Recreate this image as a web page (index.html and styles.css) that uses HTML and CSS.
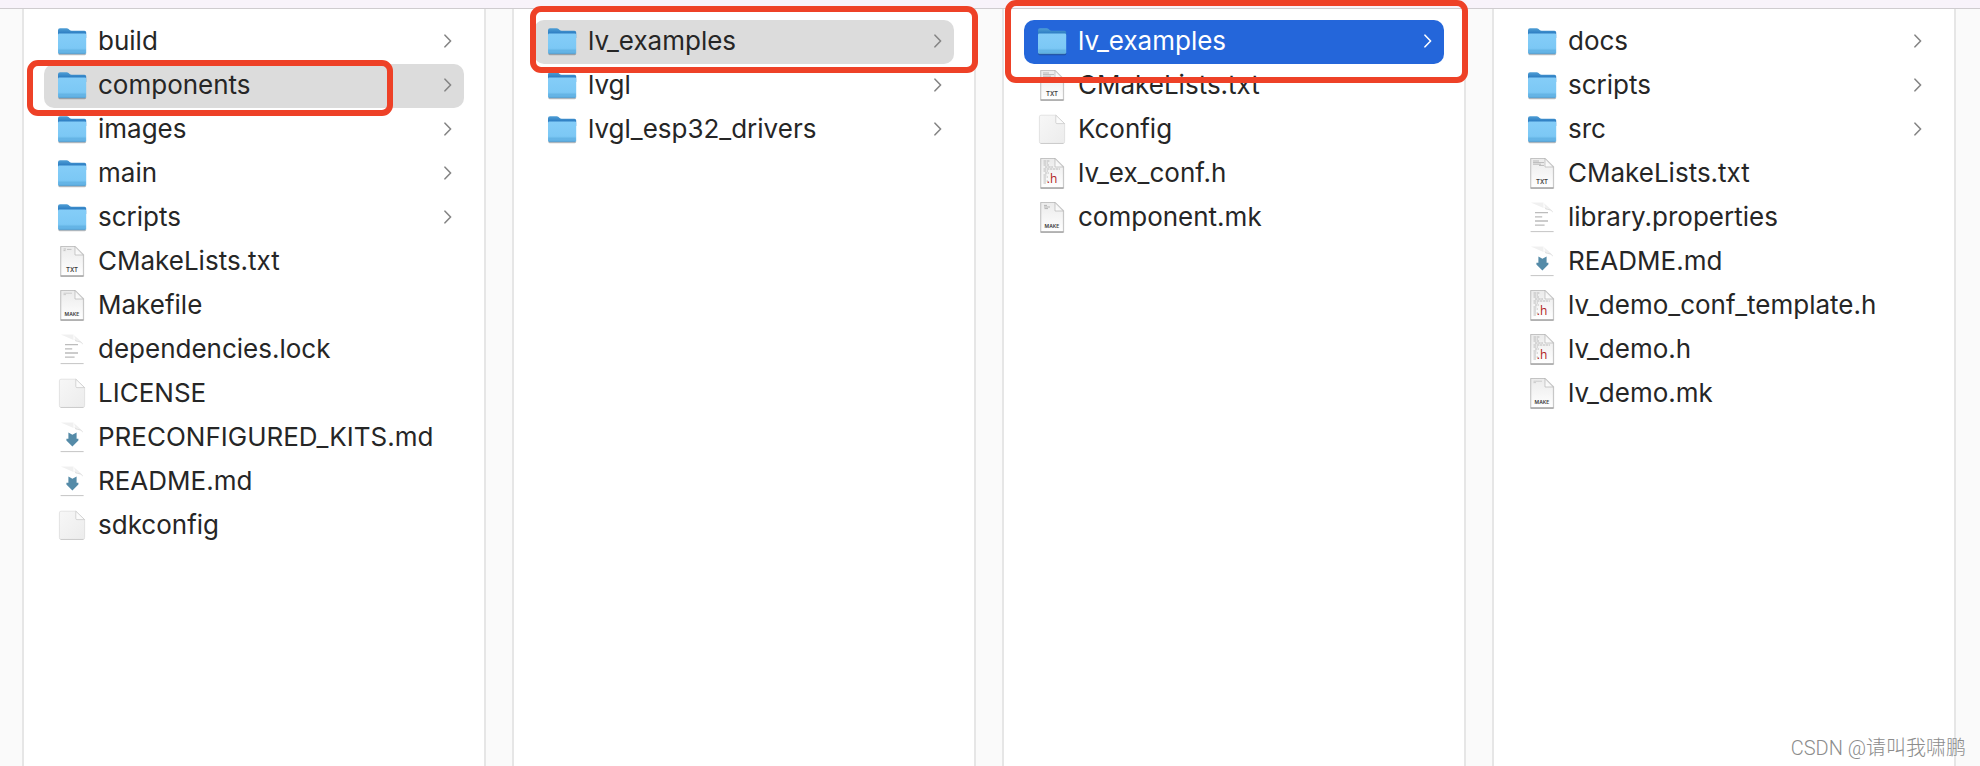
FILE: index.html
```
<!DOCTYPE html>
<html lang="en">
  <head>
    <meta charset="UTF-8" />
    <meta name="viewport" content="width=device-width, initial-scale=1.0" />
    <title>components</title>
    <link rel="stylesheet" href="styles.css">
  </head>
  <body>
    <!-- Shared icons -->
    <svg class="sprite" width="0" height="0" aria-hidden="true">
      <defs>
        <linearGradient id="folderBack" x1="0" y1="0" x2="0" y2="1">
          <stop offset="0" stop-color="#4f9fd6" />
          <stop offset="0.5" stop-color="#2f7fc3" />
          <stop offset="1" stop-color="#2f7fc3" />
        </linearGradient>
        <linearGradient id="folderFront" x1="0" y1="0" x2="0" y2="1">
          <stop offset="0" stop-color="#84cdf8" />
          <stop offset="0.7" stop-color="#7cc8f5" />
          <stop offset="1" stop-color="#62b2e4" />
        </linearGradient>
        <linearGradient id="paper" x1="0" y1="0" x2="0" y2="1">
          <stop offset="0" stop-color="#ebebeb" />
          <stop offset="1" stop-color="#ffffff" />
        </linearGradient>
        <linearGradient id="blankPaper" x1="0" y1="0" x2="1" y2="1">
          <stop offset="0" stop-color="#f7f7f7" />
          <stop offset="1" stop-color="#ececec" />
        </linearGradient>
        <linearGradient id="fold" x1="0" y1="1" x2="1" y2="0">
          <stop offset="0" stop-color="#ffffff" />
          <stop offset="0.5" stop-color="#f4f4f4" />
          <stop offset="1" stop-color="#d8d8d8" />
        </linearGradient>
        <linearGradient id="softFold" x1="0" y1="1" x2="1" y2="0">
          <stop offset="0" stop-color="#ffffff" />
          <stop offset="1" stop-color="#dedede" />
        </linearGradient>
      </defs>

      <symbol id="icon-folder" viewBox="0 0 32 32">
        <rect x="2.2" y="26" width="28" height="3.2" rx="1.4" fill="#000" opacity="0.25" />
        <path d="M2 4.2Q2 2.2 4 2.2H10.6Q11.8 2.2 12.6 3L13.6 4Q14.4 4.8 15.6 4.8H28.4Q30.2 4.8 30.2 6.4V12H2Z" fill="url(#folderBack)" />
        <path d="M2 9Q2 7.6 3.4 7.6H28.8Q30.2 7.6 30.2 9V26.6Q30.2 28 28.8 28H3.4Q2 28 2 26.6Z" fill="url(#folderFront)" />
        <path d="M2.4 24.2H29.8M2.4 26H29.8" stroke="#4a9ed3" stroke-width="0.6" opacity="0.7" />
        <path d="M3 27.8H29.2" stroke="#558eb8" stroke-width="0.6" />
      </symbol>

      <symbol id="icon-doc" viewBox="0 0 32 32">
        <path d="M4 0H19.5L28.2 8.6V30.6H4Z" fill="#000" opacity="0.12" />
        <path d="M4.8 0.5H19L27.4 9V29.8H4.8Z" fill="url(#paper)" stroke="#b5b5b5" stroke-width="0.7" />
        <path d="M4.6 30.1H27.6" stroke="#858585" stroke-width="0.9" />
        <path d="M19 0.5L27.4 9H19Z" fill="url(#fold)" stroke="#b4b4b4" stroke-width="0.7" />
      </symbol>

      <symbol id="icon-txt" viewBox="0 0 32 32">
        <use href="#icon-doc" />
        <path d="M7.5 3H10M11 3.4H15.5M7.5 4.6H9.5" stroke="#b0b0b0" stroke-width="0.7" />
      </symbol>

      <symbol id="icon-txt-full" viewBox="0 0 32 32">
        <use href="#icon-doc" />
        <path d="M7 3H13M7 4.6H18M7 6.2H15M13 7.4H18" stroke="#a4a4a4" stroke-width="0.7" />
      </symbol>

      <symbol id="icon-make" viewBox="0 0 32 32">
        <use href="#icon-doc" />
        <path d="M7.5 3.2H16M7.5 4.6H10" stroke="#bdbdbd" stroke-width="0.7" />
      </symbol>

      <symbol id="icon-make-full" viewBox="0 0 32 32">
        <use href="#icon-doc" />
        <path d="M8 3.4H11M8 5H14M8.5 6.6H12" stroke="#a4a4a4" stroke-width="0.8" />
      </symbol>

      <symbol id="icon-header" viewBox="0 0 32 32">
        <use href="#icon-doc" />
        <path d="M7.5 3H14M7.5 5H12M7.5 7H13M9 9H17M7.5 11H24M7.5 13H12M9 15H13M7.5 17H11M7.5 19H12M7.5 21H10M7.5 23H12M7.5 25H10" stroke="#adadad" stroke-width="0.8" stroke-dasharray="2.5 0.6" />
      </symbol>

      <symbol id="icon-text" viewBox="0 0 32 32">
        <path d="M4.8 0.5H17.5V6Z" fill="#ececec" opacity="0.8" />
        <path d="M17 0.5Q18.6 1 18.8 5.2L19.2 7.6Q25 7.6 26.8 10Q25.8 7.6 17 0.5Z" fill="url(#softFold)" />
        <path d="M19 5.6Q19.4 7.2 21.6 7.3Q25.4 7.6 26.8 10" fill="none" stroke="#d5d5d5" stroke-width="0.7" />
        <path d="M9 10.6H22M9 14.8H16.2M9 19H22M9 23.1H18.6" stroke="#bcbcbc" stroke-width="1.3" />
        <path d="M4.6 29.6H27.6" stroke="#bdbdbd" stroke-width="0.9" />
      </symbol>

      <symbol id="icon-markdown" viewBox="0 0 32 32">
        <path d="M4.8 0.5H17.5V6Z" fill="#ececec" opacity="0.8" />
        <path d="M17 0.5Q18.6 1 18.8 5.2L19.2 7.6Q25 7.6 26.8 10Q25.8 7.6 17 0.5Z" fill="url(#softFold)" />
        <path d="M19 5.6Q19.4 7.2 21.6 7.3Q25.4 7.6 26.8 10" fill="none" stroke="#d5d5d5" stroke-width="0.7" />
        <path d="M12.4 10.4L16.4 12.8L20.6 10.4V16.8H22.4V18.4L16.4 24.4L10.4 18.4V16.8H12.4Z" fill="#558ba8" />
        <path d="M4.6 29.6H27.6" stroke="#bdbdbd" stroke-width="0.9" />
      </symbol>

      <symbol id="icon-blank" viewBox="0 0 32 32">
        <path d="M5 1.2H19.8L28.6 9.6V27.8Q28.6 29.4 27 29.4H5Q3.4 29.4 3.4 27.8V2.8Q3.4 1.2 5 1.2Z" fill="url(#blankPaper)" stroke="#dadada" stroke-width="0.7" />
        <path d="M4.6 29.5H27.4" stroke="#c2c2c2" stroke-width="0.7" />
        <path d="M19.8 1.2L28.6 9.6H21Q19.8 9.6 19.8 8.4Z" fill="#fbfbfb" stroke="#c6c6c6" stroke-width="0.7" />
      </symbol>

      <symbol id="icon-chevron" viewBox="0 0 8 14">
        <path d="M1 1.2L6.6 7L1 12.8" fill="none" stroke="currentColor" stroke-width="1.6" stroke-linecap="round" stroke-linejoin="round" />
      </symbol>
    </svg>

    <header class="toolbar"></header>

    <main class="browser">
      <nav class="column" aria-label="Project">
        <a class="row" href="#"><svg class="icon"><use href="#icon-folder" /></svg><span class="name">build</span><svg class="chevron"><use href="#icon-chevron" /></svg></a>
        <a class="row selected" href="#"><svg class="icon"><use href="#icon-folder" /></svg><span class="name">components</span><svg class="chevron"><use href="#icon-chevron" /></svg><span class="mark mark-components"></span></a>
        <a class="row" href="#"><svg class="icon"><use href="#icon-folder" /></svg><span class="name">images</span><svg class="chevron"><use href="#icon-chevron" /></svg></a>
        <a class="row" href="#"><svg class="icon"><use href="#icon-folder" /></svg><span class="name">main</span><svg class="chevron"><use href="#icon-chevron" /></svg></a>
        <a class="row" href="#"><svg class="icon"><use href="#icon-folder" /></svg><span class="name">scripts</span><svg class="chevron"><use href="#icon-chevron" /></svg></a>
        <a class="row" href="#"><svg class="icon"><use href="#icon-txt" /><text x="16" y="26" class="doc-tag">TXT</text></svg><span class="name">CMakeLists.txt</span></a>
        <a class="row" href="#"><svg class="icon"><use href="#icon-make" /><text x="16" y="26" class="doc-tag small">MAKE</text></svg><span class="name">Makefile</span></a>
        <a class="row" href="#"><svg class="icon"><use href="#icon-text" /></svg><span class="name">dependencies.lock</span></a>
        <a class="row" href="#"><svg class="icon"><use href="#icon-blank" /></svg><span class="name">LICENSE</span></a>
        <a class="row" href="#"><svg class="icon"><use href="#icon-markdown" /></svg><span class="name">PRECONFIGURED_KITS.md</span></a>
        <a class="row" href="#"><svg class="icon"><use href="#icon-markdown" /></svg><span class="name">README.md</span></a>
        <a class="row" href="#"><svg class="icon"><use href="#icon-blank" /></svg><span class="name">sdkconfig</span></a>
      </nav>

      <nav class="column" aria-label="components">
        <a class="row selected" href="#"><svg class="icon"><use href="#icon-folder" /></svg><span class="name">lv_examples</span><svg class="chevron"><use href="#icon-chevron" /></svg><span class="mark mark-parent"></span></a>
        <a class="row" href="#"><svg class="icon"><use href="#icon-folder" /></svg><span class="name">lvgl</span><svg class="chevron"><use href="#icon-chevron" /></svg></a>
        <a class="row" href="#"><svg class="icon"><use href="#icon-folder" /></svg><span class="name">lvgl_esp32_drivers</span><svg class="chevron"><use href="#icon-chevron" /></svg></a>
      </nav>

      <nav class="column" aria-label="lv_examples">
        <a class="row active" href="#"><svg class="icon"><use href="#icon-folder" /></svg><span class="name">lv_examples</span><svg class="chevron"><use href="#icon-chevron" /></svg><span class="mark mark-active"></span></a>
        <a class="row" href="#"><svg class="icon"><use href="#icon-txt-full" /><text x="16" y="26" class="doc-tag">TXT</text></svg><span class="name">CMakeLists.txt</span></a>
        <a class="row" href="#"><svg class="icon"><use href="#icon-blank" /></svg><span class="name">Kconfig</span></a>
        <a class="row" href="#"><svg class="icon"><use href="#icon-header" /><text x="16" y="25" class="doc-ext">.h</text></svg><span class="name">lv_ex_conf.h</span></a>
        <a class="row" href="#"><svg class="icon"><use href="#icon-make-full" /><text x="16" y="26" class="doc-tag small">MAKE</text></svg><span class="name">component.mk</span></a>
      </nav>

      <nav class="column" aria-label="lv_examples contents">
        <a class="row" href="#"><svg class="icon"><use href="#icon-folder" /></svg><span class="name">docs</span><svg class="chevron"><use href="#icon-chevron" /></svg></a>
        <a class="row" href="#"><svg class="icon"><use href="#icon-folder" /></svg><span class="name">scripts</span><svg class="chevron"><use href="#icon-chevron" /></svg></a>
        <a class="row" href="#"><svg class="icon"><use href="#icon-folder" /></svg><span class="name">src</span><svg class="chevron"><use href="#icon-chevron" /></svg></a>
        <a class="row" href="#"><svg class="icon"><use href="#icon-txt-full" /><text x="16" y="26" class="doc-tag">TXT</text></svg><span class="name">CMakeLists.txt</span></a>
        <a class="row" href="#"><svg class="icon"><use href="#icon-text" /></svg><span class="name">library.properties</span></a>
        <a class="row" href="#"><svg class="icon"><use href="#icon-markdown" /></svg><span class="name">README.md</span></a>
        <a class="row" href="#"><svg class="icon"><use href="#icon-header" /><text x="16" y="25" class="doc-ext">.h</text></svg><span class="name">lv_demo_conf_template.h</span></a>
        <a class="row" href="#"><svg class="icon"><use href="#icon-header" /><text x="16" y="25" class="doc-ext">.h</text></svg><span class="name">lv_demo.h</span></a>
        <a class="row" href="#"><svg class="icon"><use href="#icon-make" /><text x="16" y="26" class="doc-tag small">MAKE</text></svg><span class="name">lv_demo.mk</span></a>
      </nav>
    </main>

    <p class="watermark">CSDN @请叫我啸鹏</p>
  </body>
</html>
```

FILE: styles.css
```
:root {
  --text-color: #262626;
  --line-color: #e6e6e6;
  --gutter-color: #fafafa;
  --selected-color: #dcdcdc;
  --active-color: #2466da;
  --mark-color: #ee4127;
}

* {
  padding: 0;
  margin: 0;
  box-sizing: border-box;
}

body {
  font-family: Inter, "Noto Sans CJK SC", sans-serif;
  font-size: 26px;
  color: var(--text-color);
  background: var(--gutter-color);
  min-height: 100vh;
  display: flex;
  flex-direction: column;
  position: relative;
}

.sprite {
  position: absolute;
}

.toolbar {
  height: 9px;
  background: #f8f3fa;
  border-bottom: 1px solid #cfcccf;
}

/* Columns */
.browser {
  flex: 1;
  display: flex;
  gap: 26px;
  padding: 0 24px 0 22px;
}

.column {
  flex: 1;
  min-width: 0;
  padding: 11px 20px;
  background: #ffffff;
  border: solid var(--line-color);
  border-width: 0 2px;
}

.row {
  position: relative;
  display: flex;
  align-items: center;
  gap: 10px;
  height: 44px;
  padding: 0 12px;
  border-radius: 10px;
  color: inherit;
  text-decoration: none;
}

.row.selected {
  background: var(--selected-color);
}

.row.active {
  background: var(--active-color);
  color: #ffffff;
}

.icon {
  flex: none;
  width: 32px;
  height: 32px;
}

.name {
  flex: 1;
  line-height: 32px;
  margin-bottom: 2px;
  white-space: nowrap;
}

.chevron {
  flex: none;
  width: 8px;
  height: 14px;
  margin-bottom: 2px;
  color: #858585;
}

.row.active .chevron {
  color: #ffffff;
}

/* Labels inside the file icons */
.doc-tag {
  font: 600 6px Inter, sans-serif;
  text-anchor: middle;
  fill: #3c3c3c;
}

.doc-tag.small {
  font-size: 5px;
}

.doc-ext {
  font: 400 12px "Open Sans", sans-serif;
  text-anchor: middle;
  fill: #b01c22;
}

/* Red outlines over the rows */
.mark {
  position: absolute;
  z-index: 1;
  border: 6px solid var(--mark-color);
  border-radius: 11px;
  pointer-events: none;
}

.mark-components {
  inset: -4px 71px -8px -17px;
}

.mark-parent {
  inset: -14px -24px -9px -4px;
}

.mark-active {
  inset: -20px -24px -19px -19px;
}

.watermark {
  position: absolute;
  right: 14px;
  bottom: 6px;
  font-family: Roboto, "Noto Sans CJK SC", sans-serif;
  font-size: 20px;
  font-weight: 300;
  line-height: 24px;
  color: #8c8c8c;
}
```
